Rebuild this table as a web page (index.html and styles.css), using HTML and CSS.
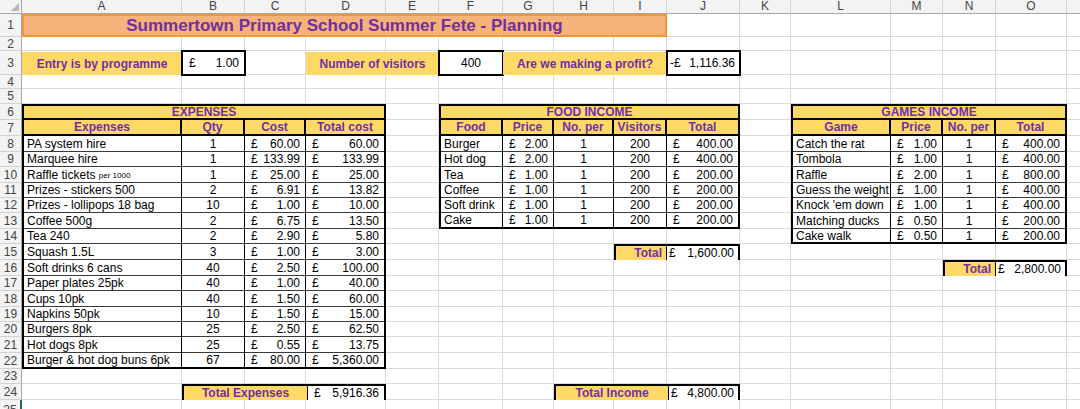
FILE: index.html
```html
<!DOCTYPE html>
<html lang="en">
<head>
<meta charset="utf-8">
<title>Summertown Primary School Summer Fete - Planning</title>
<link rel="stylesheet" href="styles.css">
</head>
<body>
<div class="wrap">
  <div class="sheet bg">
    <div class="corner"><span class="tri"></span></div>
    <div class="ch">A</div><div class="ch">B</div><div class="ch">C</div><div class="ch">D</div><div class="ch">E</div><div class="ch">F</div><div class="ch">G</div><div class="ch">H</div><div class="ch">I</div><div class="ch">J</div><div class="ch">K</div><div class="ch">L</div><div class="ch">M</div><div class="ch">N</div><div class="ch">O</div><div class="ch"></div>
    <div class="rh">1</div><i></i><i></i><i></i><i></i><i></i><i></i><i></i><i></i><i></i><i></i><i></i><i></i><i></i><i></i><i></i><i></i>
    <div class="rh">2</div><i></i><i></i><i></i><i></i><i></i><i></i><i></i><i></i><i></i><i></i><i></i><i></i><i></i><i></i><i></i><i></i>
    <div class="rh">3</div><i></i><i></i><i></i><i></i><i></i><i></i><i></i><i></i><i></i><i></i><i></i><i></i><i></i><i></i><i></i><i></i>
    <div class="rh">4</div><i></i><i></i><i></i><i></i><i></i><i></i><i></i><i></i><i></i><i></i><i></i><i></i><i></i><i></i><i></i><i></i>
    <div class="rh">5</div><i></i><i></i><i></i><i></i><i></i><i></i><i></i><i></i><i></i><i></i><i></i><i></i><i></i><i></i><i></i><i></i>
    <div class="rh">6</div><i></i><i></i><i></i><i></i><i></i><i></i><i></i><i></i><i></i><i></i><i></i><i></i><i></i><i></i><i></i><i></i>
    <div class="rh">7</div><i></i><i></i><i></i><i></i><i></i><i></i><i></i><i></i><i></i><i></i><i></i><i></i><i></i><i></i><i></i><i></i>
    <div class="rh">8</div><i></i><i></i><i></i><i></i><i></i><i></i><i></i><i></i><i></i><i></i><i></i><i></i><i></i><i></i><i></i><i></i>
    <div class="rh">9</div><i></i><i></i><i></i><i></i><i></i><i></i><i></i><i></i><i></i><i></i><i></i><i></i><i></i><i></i><i></i><i></i>
    <div class="rh">10</div><i></i><i></i><i></i><i></i><i></i><i></i><i></i><i></i><i></i><i></i><i></i><i></i><i></i><i></i><i></i><i></i>
    <div class="rh">11</div><i></i><i></i><i></i><i></i><i></i><i></i><i></i><i></i><i></i><i></i><i></i><i></i><i></i><i></i><i></i><i></i>
    <div class="rh">12</div><i></i><i></i><i></i><i></i><i></i><i></i><i></i><i></i><i></i><i></i><i></i><i></i><i></i><i></i><i></i><i></i>
    <div class="rh">13</div><i></i><i></i><i></i><i></i><i></i><i></i><i></i><i></i><i></i><i></i><i></i><i></i><i></i><i></i><i></i><i></i>
    <div class="rh">14</div><i></i><i></i><i></i><i></i><i></i><i></i><i></i><i></i><i></i><i></i><i></i><i></i><i></i><i></i><i></i><i></i>
    <div class="rh">15</div><i></i><i></i><i></i><i></i><i></i><i></i><i></i><i></i><i></i><i></i><i></i><i></i><i></i><i></i><i></i><i></i>
    <div class="rh">16</div><i></i><i></i><i></i><i></i><i></i><i></i><i></i><i></i><i></i><i></i><i></i><i></i><i></i><i></i><i></i><i></i>
    <div class="rh">17</div><i></i><i></i><i></i><i></i><i></i><i></i><i></i><i></i><i></i><i></i><i></i><i></i><i></i><i></i><i></i><i></i>
    <div class="rh">18</div><i></i><i></i><i></i><i></i><i></i><i></i><i></i><i></i><i></i><i></i><i></i><i></i><i></i><i></i><i></i><i></i>
    <div class="rh">19</div><i></i><i></i><i></i><i></i><i></i><i></i><i></i><i></i><i></i><i></i><i></i><i></i><i></i><i></i><i></i><i></i>
    <div class="rh">20</div><i></i><i></i><i></i><i></i><i></i><i></i><i></i><i></i><i></i><i></i><i></i><i></i><i></i><i></i><i></i><i></i>
    <div class="rh">21</div><i></i><i></i><i></i><i></i><i></i><i></i><i></i><i></i><i></i><i></i><i></i><i></i><i></i><i></i><i></i><i></i>
    <div class="rh">22</div><i></i><i></i><i></i><i></i><i></i><i></i><i></i><i></i><i></i><i></i><i></i><i></i><i></i><i></i><i></i><i></i>
    <div class="rh">23</div><i></i><i></i><i></i><i></i><i></i><i></i><i></i><i></i><i></i><i></i><i></i><i></i><i></i><i></i><i></i><i></i>
    <div class="rh">24</div><i></i><i></i><i></i><i></i><i></i><i></i><i></i><i></i><i></i><i></i><i></i><i></i><i></i><i></i><i></i><i></i>
    <div class="rh active">25</div><i></i><i></i><i></i><i></i><i></i><i></i><i></i><i></i><i></i><i></i><i></i><i></i><i></i><i></i><i></i><i></i>
  </div>

  <div class="sheet fg">
    <div class="title">Summertown Primary School Summer Fete - Planning</div>

    <div class="lbl entry">Entry is by programme</div>
    <div class="box b3 m"><span>£</span><span>1.00</span></div>
    <div class="lbl visitors">Number of visitors</div>
    <div class="box f3 c">400</div>
    <div class="lbl profit">Are we making a profit?</div>
    <div class="box j3 m tight"><span>-£</span><span>1,116.36</span></div>

    <section class="tbl expenses">
      <div class="cap">EXPENSES</div>
      <div class="hd">Expenses</div><div class="hd">Qty</div><div class="hd">Cost</div><div class="hd">Total cost</div>
      <div class="t">PA system hire</div><div class="c">1</div><div class="m"><span>£</span><span>60.00</span></div><div class="m"><span>£</span><span>60.00</span></div>
      <div class="t">Marquee hire</div><div class="c">1</div><div class="m"><span>£</span><span>133.99</span></div><div class="m"><span>£</span><span>133.99</span></div>
      <div class="t">Raffle tickets&nbsp;<small>per 1000</small></div><div class="c">1</div><div class="m"><span>£</span><span>25.00</span></div><div class="m"><span>£</span><span>25.00</span></div>
      <div class="t">Prizes - stickers 500</div><div class="c">2</div><div class="m"><span>£</span><span>6.91</span></div><div class="m"><span>£</span><span>13.82</span></div>
      <div class="t">Prizes - lollipops 18 bag</div><div class="c">10</div><div class="m"><span>£</span><span>1.00</span></div><div class="m"><span>£</span><span>10.00</span></div>
      <div class="t">Coffee 500g</div><div class="c">2</div><div class="m"><span>£</span><span>6.75</span></div><div class="m"><span>£</span><span>13.50</span></div>
      <div class="t">Tea 240</div><div class="c">2</div><div class="m"><span>£</span><span>2.90</span></div><div class="m"><span>£</span><span>5.80</span></div>
      <div class="t">Squash 1.5L</div><div class="c">3</div><div class="m"><span>£</span><span>1.00</span></div><div class="m"><span>£</span><span>3.00</span></div>
      <div class="t">Soft drinks 6 cans</div><div class="c">40</div><div class="m"><span>£</span><span>2.50</span></div><div class="m"><span>£</span><span>100.00</span></div>
      <div class="t">Paper plates 25pk</div><div class="c">40</div><div class="m"><span>£</span><span>1.00</span></div><div class="m"><span>£</span><span>40.00</span></div>
      <div class="t">Cups 10pk</div><div class="c">40</div><div class="m"><span>£</span><span>1.50</span></div><div class="m"><span>£</span><span>60.00</span></div>
      <div class="t">Napkins 50pk</div><div class="c">10</div><div class="m"><span>£</span><span>1.50</span></div><div class="m"><span>£</span><span>15.00</span></div>
      <div class="t">Burgers 8pk</div><div class="c">25</div><div class="m"><span>£</span><span>2.50</span></div><div class="m"><span>£</span><span>62.50</span></div>
      <div class="t">Hot dogs 8pk</div><div class="c">25</div><div class="m"><span>£</span><span>0.55</span></div><div class="m"><span>£</span><span>13.75</span></div>
      <div class="t">Burger &amp; hot dog buns 6pk</div><div class="c">67</div><div class="m"><span>£</span><span>80.00</span></div><div class="m"><span>£</span><span>5,360.00</span></div>
    </section>

    <section class="tbl food">
      <div class="cap">FOOD INCOME</div>
      <div class="hd">Food</div><div class="hd">Price</div><div class="hd">No. per</div><div class="hd">Visitors</div><div class="hd">Total</div>
      <div class="t">Burger</div><div class="m"><span>£</span><span>2.00</span></div><div class="c">1</div><div class="c">200</div><div class="m"><span>£</span><span>400.00</span></div>
      <div class="t">Hot dog</div><div class="m"><span>£</span><span>2.00</span></div><div class="c">1</div><div class="c">200</div><div class="m"><span>£</span><span>400.00</span></div>
      <div class="t">Tea</div><div class="m"><span>£</span><span>1.00</span></div><div class="c">1</div><div class="c">200</div><div class="m"><span>£</span><span>200.00</span></div>
      <div class="t">Coffee</div><div class="m"><span>£</span><span>1.00</span></div><div class="c">1</div><div class="c">200</div><div class="m"><span>£</span><span>200.00</span></div>
      <div class="t">Soft drink</div><div class="m"><span>£</span><span>1.00</span></div><div class="c">1</div><div class="c">200</div><div class="m"><span>£</span><span>200.00</span></div>
      <div class="t">Cake</div><div class="m"><span>£</span><span>1.00</span></div><div class="c">1</div><div class="c">200</div><div class="m"><span>£</span><span>200.00</span></div>
    </section>

    <section class="tbl games">
      <div class="cap">GAMES INCOME</div>
      <div class="hd">Game</div><div class="hd">Price</div><div class="hd">No. per</div><div class="hd">Total</div>
      <div class="t">Catch the rat</div><div class="m"><span>£</span><span>1.00</span></div><div class="c">1</div><div class="m"><span>£</span><span>400.00</span></div>
      <div class="t">Tombola</div><div class="m"><span>£</span><span>1.00</span></div><div class="c">1</div><div class="m"><span>£</span><span>400.00</span></div>
      <div class="t">Raffle</div><div class="m"><span>£</span><span>2.00</span></div><div class="c">1</div><div class="m"><span>£</span><span>800.00</span></div>
      <div class="t">Guess the weight</div><div class="m"><span>£</span><span>1.00</span></div><div class="c">1</div><div class="m"><span>£</span><span>400.00</span></div>
      <div class="t">Knock 'em down</div><div class="m"><span>£</span><span>1.00</span></div><div class="c">1</div><div class="m"><span>£</span><span>400.00</span></div>
      <div class="t">Matching ducks</div><div class="m"><span>£</span><span>0.50</span></div><div class="c">1</div><div class="m"><span>£</span><span>200.00</span></div>
      <div class="t">Cake walk</div><div class="m"><span>£</span><span>0.50</span></div><div class="c">1</div><div class="m"><span>£</span><span>200.00</span></div>
    </section>

    <div class="tot food-total"><div class="tl right">Total</div><div class="m tight"><span>£</span><span>1,600.00</span></div></div>
    <div class="tot games-total"><div class="tl right">Total</div><div class="m tight"><span>£</span><span>2,800.00</span></div></div>
    <div class="tot exp-total"><div class="tl">Total Expenses</div><div class="m"><span>£</span><span>5,916.36</span></div></div>
    <div class="tot inc-total"><div class="tl">Total Income</div><div class="m tight"><span>£</span><span>4,800.00</span></div></div>
  </div>
</div>
</body>
</html>
```

FILE: styles.css
```css
* { box-sizing: border-box; margin: 0; padding: 0; }
html, body { background: #fff; overflow: hidden; }
body {
  width: 1080px;
  height: 409px;
  font-family: "Liberation Sans", Arial, sans-serif;
  font-size: 12px;
  color: #000;
}
.wrap { display: grid; }
.sheet {
  grid-area: 1 / 1;
  display: grid;
  grid-template-columns: 22px 160px 63px 61px 80px 53px 64px 51px 60px 53px 73px 51px 100px 52px 53px 71px 30px;
  grid-template-rows: 14px 23px 14px 24px 14px 15px 16px 16px 16px 15px 16px 15px 15px 16px 15px 16px 16px 15px 16px 15px 15px 16px 16px 15px 16px 20px;
}

/* background gridlines and headers */
.bg > i { border-right: 1px solid #dadada; border-bottom: 1px solid #dadada; }
.bg > .ch {
  background: #f3f3f3;
  border-right: 1px solid #d2d2d2;
  border-bottom: 1px solid #a8a8a8;
  color: #444;
  text-align: center;
  font-size: 12px;
  line-height: 13px;
}
.bg > .rh {
  background: #f3f3f3;
  border-right: 1px solid #a8a8a8;
  border-bottom: 1px solid #d2d2d2;
  color: #444;
  font-size: 12px;
  display: flex;
  align-items: center;
  justify-content: center;
}
.bg > .rh.active { border-right: 2px solid #217346; }
.corner {
  background: #f3f3f3;
  border-right: 1px solid #a8a8a8;
  border-bottom: 1px solid #a8a8a8;
  display: flex;
  align-items: flex-end;
  justify-content: flex-end;
}
.tri {
  width: 0; height: 0;
  border-left: 8px solid transparent;
  border-bottom: 8px solid #b8b8b8;
  margin: 0 2px 2px 0;
}

/* foreground content */
.fg > * { display: flex; align-items: center; }
.title {
  grid-column: 2 / 11;
  grid-row: 2;
  justify-content: center;
  background: #f5b27a;
  border: 2px solid #f7962e;
  color: #7030a0;
  font-weight: bold;
  font-size: 17px;
  padding-top: 1px;
}
.lbl {
  grid-row: 4;
  background: #ffd966;
  color: #7030a0;
  font-weight: bold;
  justify-content: center;
  margin: 1px 0 0 0;
}
.entry { grid-column: 2 / 3; }
.visitors { grid-column: 5 / 7; }
.profit { grid-column: 8 / 11; }
.box {
  grid-row: 4;
  background: #fff;
  border: 2px solid #000;
  margin: -1px;
}
.b3 { grid-column: 3 / 4; }
.f3 { grid-column: 7 / 8; }
.j3 { grid-column: 11 / 12; }

.m { display: flex; justify-content: space-between; padding: 0 5px 0 6px; }
.m.tight { padding: 0 4px 0 2px; }
.c { justify-content: center; }
.t { padding-left: 3px; white-space: nowrap; }
.t small { font-size: 8px; margin-top: 2px; }

.tbl {
  display: grid;
  grid-template-columns: subgrid;
  grid-template-rows: subgrid;
  border: 2px solid #000;
  align-items: stretch;
}
.tbl > div {
  display: flex;
  align-items: center;
  border-right: 1px solid #000;
  border-bottom: 1px solid #3a3a3a;
  background: #fff;
}
.tbl > .cap {
  grid-column: 1 / -1;
  justify-content: center;
  background: #ffd966;
  color: #7030a0;
  font-weight: bold;
  border-right: 0;
  border-bottom: 2px solid #000;
}
.tbl > .hd {
  justify-content: center;
  background: #ffd966;
  color: #7030a0;
  font-weight: bold;
  border-right: 2px solid #000;
  border-bottom: 2px solid #000;
}
.expenses { grid-column: 2 / 6; grid-row: 7 / 24; }
.food { grid-column: 7 / 12; grid-row: 7 / 15; }
.games { grid-column: 13 / 17; grid-row: 7 / 16; }
.expenses > :nth-child(4n+5),
.games > :nth-child(4n+5),
.food > :nth-child(5n+6) { border-right: 0; }
.expenses > :nth-last-child(-n+4),
.games > :nth-last-child(-n+4),
.food > :nth-last-child(-n+5) { border-bottom: 0; }

.tot {
  display: grid;
  grid-template-columns: subgrid;
  border: 2px solid #000;
  align-items: stretch;
}
.tot > div { display: flex; align-items: center; background: #fff; }
.tot > .tl {
  background: #ffd966;
  color: #7030a0;
  font-weight: bold;
  justify-content: center;
  border-right: 1px solid #000;
}
.tot > .tl.right { justify-content: flex-end; padding-right: 4px; }
.food-total { grid-column: 10 / 12; grid-row: 16; }
.games-total { grid-column: 15 / 17; grid-row: 17; }
.exp-total { grid-column: 3 / 6; grid-row: 25; grid-template-columns: 124px 1fr; }
.inc-total { grid-column: 9 / 12; grid-row: 25; grid-template-columns: 113px 1fr; }
```
